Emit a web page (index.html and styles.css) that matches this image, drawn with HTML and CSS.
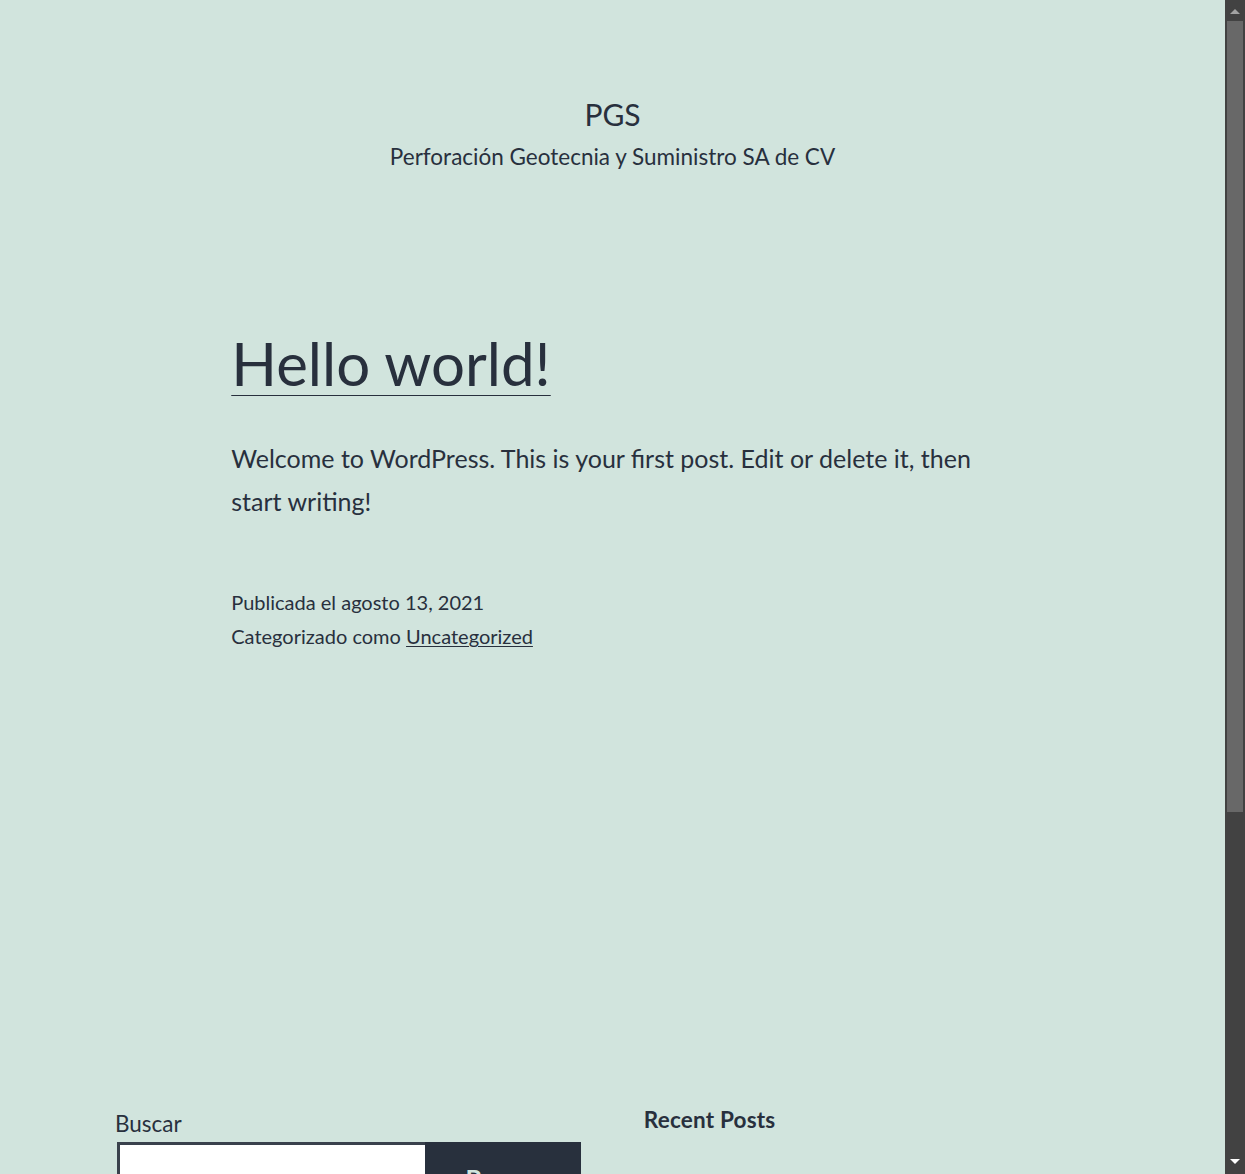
FILE: index.html
```html
<!DOCTYPE html>
<html lang="es">
<head>
<meta charset="utf-8">
<title>PGS – Perforación Geotecnia y Suministro SA de CV</title>
<link rel="stylesheet" href="styles.css">
</head>
<body>
<div class="page">
  <header class="site-header">
    <p class="site-title">PGS</p>
    <p class="site-description">Perforación Geotecnia y Suministro SA de CV</p>
  </header>

  <main class="site-main">
    <article class="post">
      <h2 class="entry-title"><a href="#">Hello world!</a></h2>
      <div class="entry-content">
        <p>Welcome to WordPress. This is your first post. Edit or delete it, then start writing!</p>
      </div>
      <footer class="entry-footer">
        <div class="posted-on">Publicada el agosto 13, 2021</div>
        <div class="cat-links">Categorizado como <a href="#">Uncategorized</a></div>
      </footer>
    </article>
  </main>

  <aside class="widget-area">
    <section class="widget widget-search">
      <label class="search-label" for="s">Buscar</label>
      <form class="search-form">
        <input class="search-input" id="s" type="search">
        <button class="search-button" type="button">Buscar</button>
      </form>
    </section>
    <section class="widget widget-recent">
      <h2 class="widget-title">Recent Posts</h2>
    </section>
  </aside>
</div>

<div class="scrollbar" aria-hidden="true">
  <svg class="arrow arrow-up" width="20" height="17" viewBox="0 0 20 17"><polygon points="5,14 15,14 10,9" /></svg>
  <div class="track"><div class="thumb"></div></div>
  <svg class="arrow arrow-down" width="20" height="17" viewBox="0 0 20 17"><polygon points="5,2 15,2 10,7" /></svg>
</div>
</body>
</html>
```
FILE: styles.css
```css
html, body {
  margin: 0;
  padding: 0;
}

body {
  background: #d1e4dd;
  color: #28303d;
  font-family: Lato, "Liberation Sans", sans-serif;
  overflow: hidden;
}

a {
  color: inherit;
}

.page {
  margin-right: 20px;
  padding-bottom: 200px;
}

/* Header */
.site-header {
  padding-top: 95px;
  text-align: center;
}

.site-title {
  margin: 0;
  font-size: 30px;
  line-height: 1.3;
  font-weight: 400;
}

.site-description {
  margin: 7px 0 0;
  font-size: 22.5px;
  line-height: 1.4;
}

/* Post */
.post {
  width: 762.5px;
  margin: 0 auto;
}

.entry-title {
  margin: 151.4px 0 0;
  font-size: 60px;
  line-height: 1.3;
  font-weight: 400;
}

.entry-title a {
  text-decoration: underline;
  text-decoration-thickness: 1px;
  text-underline-offset: 9px;
}

.entry-content p {
  margin: 35.3px 0 0;
  font-size: 25px;
  line-height: 1.7;
}

.entry-footer {
  margin-top: 63.2px;
  font-size: 20px;
  line-height: 1.7;
}

.entry-footer a {
  text-decoration-thickness: 1px;
  text-underline-offset: 2px;
}

/* Widgets */
.widget-area {
  width: 995px;
  margin: 451.7px auto 0;
  display: grid;
  grid-template-columns: 1fr 1fr;
  column-gap: 62.5px;
  align-items: start;
}

.search-label {
  display: block;
  margin-top: 4.4px;
  font-size: 22.5px;
  line-height: 1.3;
}

.search-form {
  display: flex;
  margin-top: 3.6px;
  height: 72px;
}

.search-input {
  flex: 1;
  min-width: 0;
  margin: 0 0 0 2px;
  border: 3px solid #39414c;
  border-right-width: 0;
  background: #fff;
  border-radius: 0;
  padding: 0;
  box-sizing: border-box;
}

.search-button {
  width: 156px;
  border: 0;
  border-radius: 0;
  margin: 0;
  background: #28303d;
  color: #d1e4dd;
  font-family: inherit;
  font-size: 25px;
  font-weight: 700;
  line-height: 1.5;
  padding: 0;
}

.widget-title {
  margin: 0;
  font-size: 22.5px;
  line-height: 1.3;
  font-weight: 700;
  letter-spacing: 0.2px;
}

/* Browser scrollbar (drawn) */
.scrollbar {
  position: fixed;
  top: 0;
  right: 0;
  width: 20px;
  height: 100vh;
  background: #424242;
  display: flex;
  flex-direction: column;
}

.arrow {
  flex: none;
  display: block;
}

.arrow-up polygon {
  fill: #a3a3a3;
}

.arrow-down polygon {
  fill: #ffffff;
}

.track {
  flex: 1;
  padding: 4px 2px 0 2px;
}

.thumb {
  height: 791px;
  background: #686868;
}
```
